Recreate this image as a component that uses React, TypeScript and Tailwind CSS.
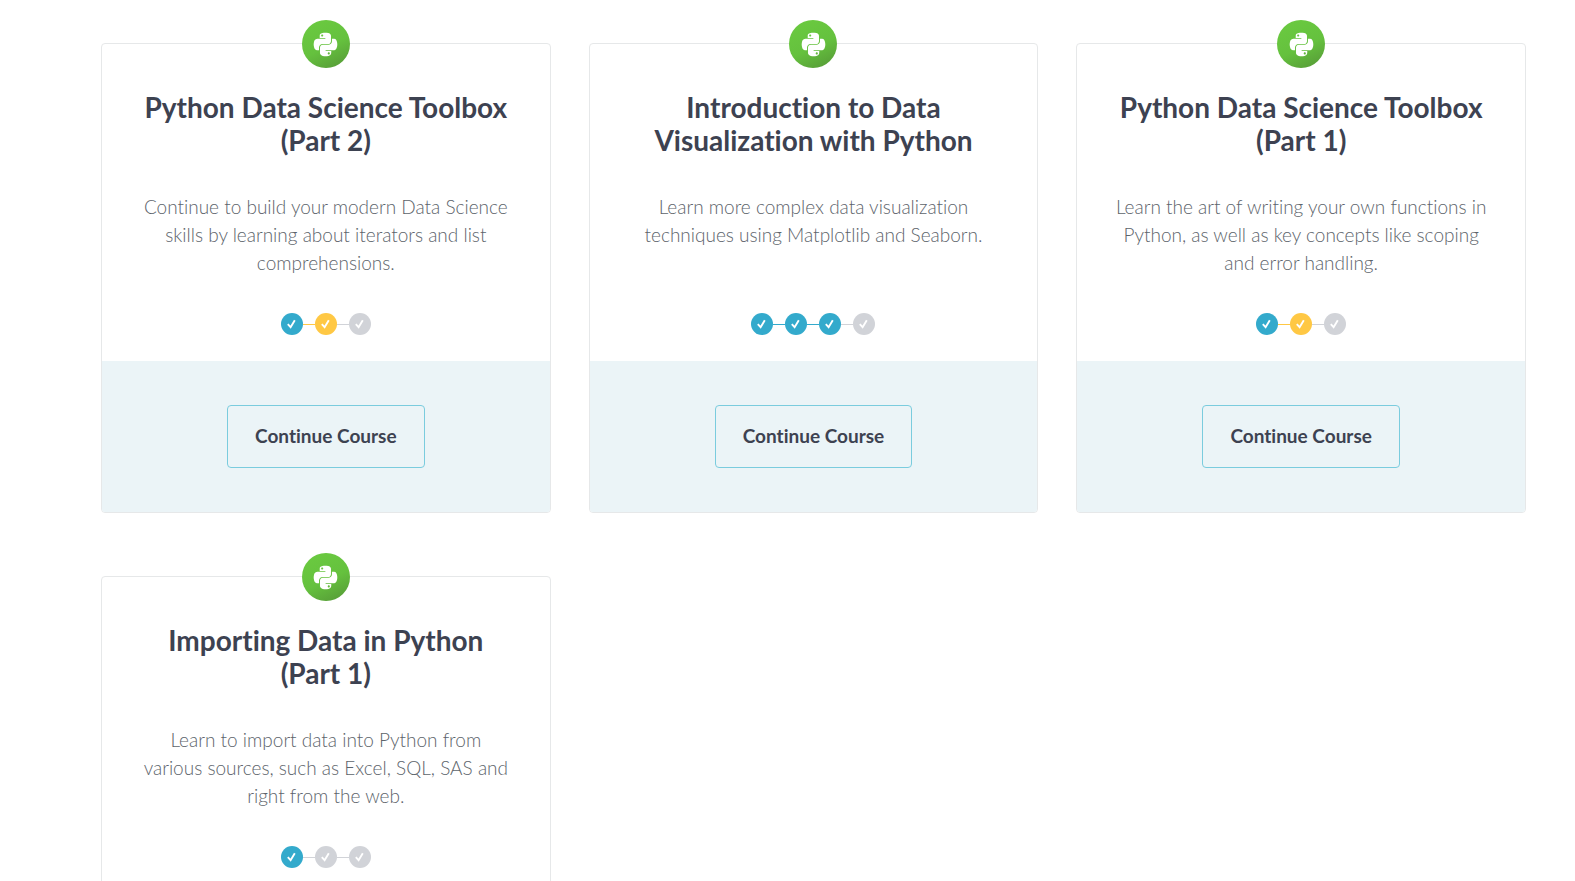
import { FaPython } from "react-icons/fa";

type StepState = "done" | "active" | "pending";

interface Course {
  title: string;
  description: string;
  steps: StepState[];
}

const courses: Course[] = [
  {
    title: "Python Data Science Toolbox (Part 2)",
    description:
      "Continue to build your modern Data Science skills by learning about iterators and list comprehensions.",
    steps: ["done", "active", "pending"],
  },
  {
    title: "Introduction to Data Visualization with Python",
    description:
      "Learn more complex data visualization techniques using Matplotlib and Seaborn.",
    steps: ["done", "done", "done", "pending"],
  },
  {
    title: "Python Data Science Toolbox (Part 1)",
    description:
      "Learn the art of writing your own functions in Python, as well as key concepts like scoping and error handling.",
    steps: ["done", "active", "pending"],
  },
  {
    title: "Importing Data in Python (Part 1)",
    description:
      "Learn to import data into Python from various sources, such as Excel, SQL, SAS and right from the web.",
    steps: ["done", "pending", "pending"],
  },
];

const stepColor: Record<StepState, string> = {
  done: "bg-[#33aacc]",
  active: "bg-[#ffc844]",
  pending: "bg-[#d1d3d8]",
};

function Progress({ steps }: { steps: StepState[] }) {
  return (
    <ol className="flex items-center justify-center">
      {steps.map((state, i) => (
        <li key={i} className="flex items-center">
          {i > 0 && <span className={`h-px w-3 ${stepColor[state]}`} />}
          <span
            className={`flex size-[22px] items-center justify-center rounded-full ${stepColor[state]}`}
          >
            <svg viewBox="0 0 22 22" className="size-[22px]" fill="none" aria-hidden="true">
              <path d="M6.8 11.2 L9.6 14.2 L13.8 7.2" stroke="#fff" strokeWidth="1.9" />
            </svg>
          </span>
        </li>
      ))}
    </ol>
  );
}

function CourseCard({ course }: { course: Course }) {
  return (
    <article className="relative flex flex-col rounded-[4px] border border-[#e6e8e9] bg-white text-center">
      <div className="absolute inset-x-0 -top-6 flex justify-center">
        <span className="flex size-12 items-center justify-center rounded-full bg-[linear-gradient(155deg,#6bcb40_0%,#65c13e_55%,#549636_100%)]">
          <FaPython className="size-[27px] text-white" aria-hidden="true" />
        </span>
      </div>
      <div className="flex grow flex-col px-[38px] pt-[47px] pb-[26px]">
        <h2 className="text-[28px] leading-[33px] font-bold text-[#3d4251]">{course.title}</h2>
        <p className="mt-9 mb-9 grow text-[19px] leading-7 font-light text-[#5d646b]">
          {course.description}
        </p>
        <Progress steps={course.steps} />
      </div>
      <div className="flex justify-center rounded-b-[3px] bg-[#ebf4f7] py-11">
        <button
          type="button"
          className="h-[63px] cursor-pointer rounded-[4px] border border-[#7accde] px-[27px] text-[19px] font-bold text-[#3d4251]"
        >
          Continue Course
        </button>
      </div>
    </article>
  );
}

export default function App() {
  return (
    <main className="min-h-screen bg-white pt-[43px] pr-[49px] pb-10 pl-[101px] font-['Lato','Open_Sans',sans-serif] [font-variant-ligatures:none]">
      <div className="grid grid-cols-3 gap-x-[38px] gap-y-[63px]">
        {courses.map((course) => (
          <CourseCard key={course.title} course={course} />
        ))}
      </div>
    </main>
  );
}
